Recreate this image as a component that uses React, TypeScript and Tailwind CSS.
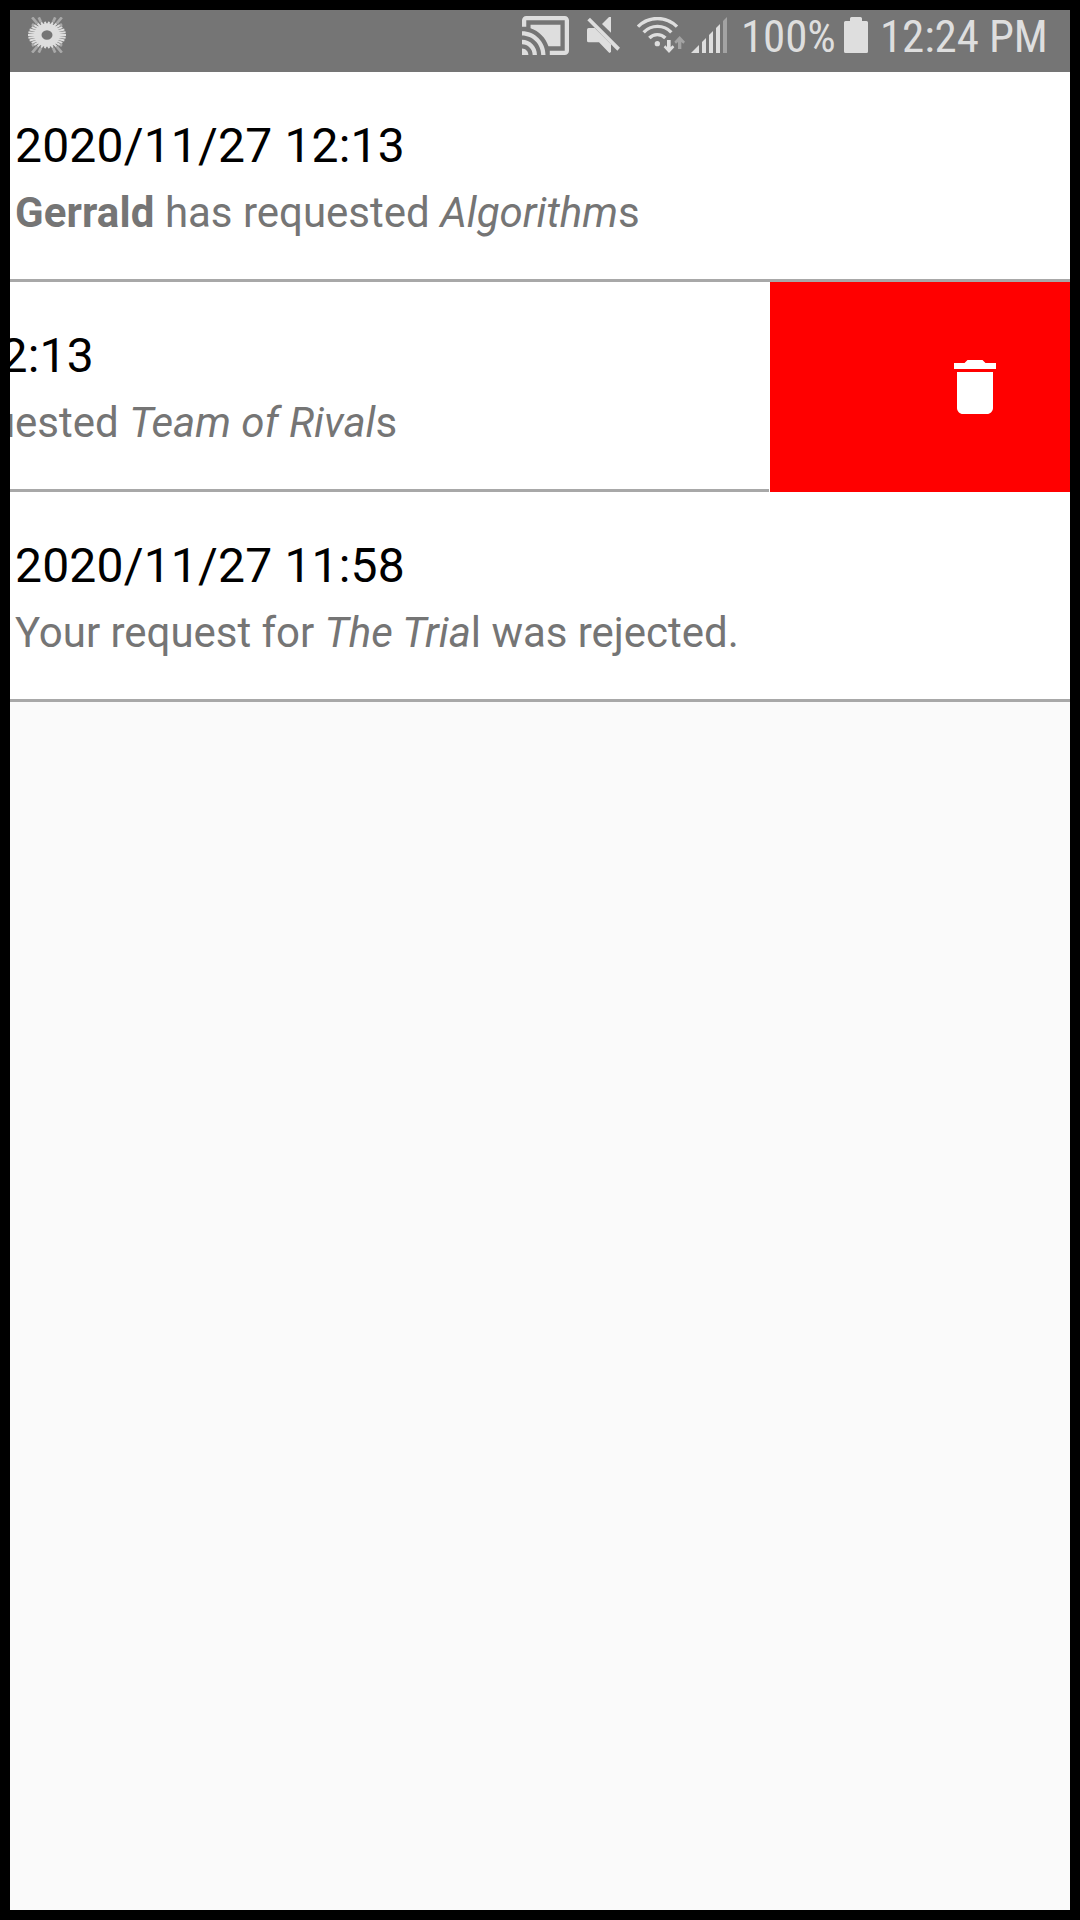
import type { ReactNode } from "react";

const rays = Array.from({ length: 30 }, (_, i) => (i * 2 * Math.PI) / 30);
const cornerRays = [36, 50, 65].flatMap((a) => [a, 180 - a, 180 + a, 360 - a]);

function FlowerIcon() {
  return (
    <svg className="ml-[18px] mt-[7px] h-9 w-[38px] shrink-0" viewBox="84 52 114 108">
      {cornerRays.map((deg) => {
        const a = (deg * Math.PI) / 180;
        const r = Math.min(53 / Math.abs(Math.sin(a)), 45 / Math.abs(Math.cos(a)));
        return (
          <line key={deg} x1={141 + 36 * Math.cos(a)} y1={106 + 36 * Math.sin(a)} x2={141 + r * Math.cos(a)} y2={106 + r * Math.sin(a)} stroke="#a9a9a9" strokeWidth="8" />
        );
      })}
      <ellipse cx="141" cy="106" rx="50" ry="42" fill="#757575" />
      {rays.map((a) => (
        <line key={a} x1={141 + 24 * Math.cos(a)} y1={106 + 22 * Math.sin(a)} x2={141 + 57 * Math.cos(a)} y2={106 + 40 * Math.sin(a)} stroke="#dedede" strokeWidth="6" />
      ))}
      <ellipse cx="141" cy="106" rx="27" ry="25" fill="none" stroke="#dedede" strokeWidth="21" />
    </svg>
  );
}

function CastIcon() {
  return (
    <svg className="mt-1.5 h-[39px] w-[47px] shrink-0" viewBox="1 3 22 18" preserveAspectRatio="none" fill="#dedede">
      <path d="M1 18v3h3c0-1.66-1.34-3-3-3zm0-4v2c2.76 0 5 2.24 5 5h2c0-3.87-3.13-7-7-7zm18-7H5v1.63c3.96 1.28 7.09 4.41 8.37 8.37H19V7zM1 10v2c4.97 0 9 4.03 9 9h2c0-6.08-4.93-11-11-11zm20-7H3c-1.1 0-2 .9-2 2v3h2V5h18v14h-7v2h7c1.1 0 2-.9 2-2V5c0-1.1-.9-2-2-2z" />
    </svg>
  );
}

function MuteIcon() {
  return (
    <svg className="ml-[18px] mt-[7px] h-9 w-[33px] shrink-0" viewBox="231 51 99 108" fill="#dedede">
      <path d="M236 84H254L303 133V156L298 159L267 127H236Q231 127 231 122V89Q231 84 236 84Z" />
      <path d="M276 72L297 51H303V98Z" />
      <path d="M232 61L240 53L330 143L322 152Z" />
    </svg>
  );
}

function WifiIcon() {
  return (
    <svg className="ml-[17px] mt-[7px] h-9 w-12 shrink-0" viewBox="51 51 144 108" fill="#dedede">
      <g fill="none" stroke="#dedede" strokeWidth="10">
        <path d="M54 80A82 82 0 0 1 171 80" />
        <path d="M71 97A57 57 0 0 1 154 97" />
        <path d="M88 114A33 33 0 0 1 136 114" />
      </g>
      <circle cx="112" cy="131" r="8" />
      <path d="M141 120H152V141L158 136L163 142L147 159L131 142L136 136L141 141Z" />
      <path d="M174 147H184V126L190 131L195 125L179 108L163 125L168 131L174 126Z" fill="#a3a3a3" />
    </svg>
  );
}

function SignalIcon() {
  return (
    <svg className="ml-1.5 mt-[7px] h-9 w-9 shrink-0" viewBox="213 51 108 108" fill="#dedede">
      <path d="M213 159L237 135V159ZM246 159V126L258 114V159ZM267 159V105L279 93V159ZM288 159V84L300 72V159Z" />
      <path d="M309 159V63L321 51V159Z" fill="#a3a3a3" />
    </svg>
  );
}

function BatteryIcon() {
  return (
    <svg className="mt-[7px] h-9 w-6 shrink-0" viewBox="0 0 24 36" fill="#dedede">
      <path d="M6 4V1.5Q6 0 7.500 0H16.500Q18 0 18 1.500V4H22.500Q24 4 24 5.500V34.500Q24 36 22.500 36H1.500Q0 36 0 34.500V5.500Q0 4 1.500 4Z" />
    </svg>
  );
}

function StatusBar() {
  return (
    <header className="flex h-[62px] items-start bg-[#757575] text-[45px] leading-[54px] tracking-[-0.12px] text-[#dedede] [font-stretch:75%]">
      <FlowerIcon />
      <div className="ml-[456px] flex items-start">
        <CastIcon />
        <MuteIcon />
        <WifiIcon />
        <SignalIcon />
        <span className="ml-3.5 w-[103px] whitespace-nowrap">100%</span>
        <BatteryIcon />
        <span className="ml-3 whitespace-nowrap">12:24 PM</span>
      </div>
    </header>
  );
}

function Notification({ date, children }: { date: string; children: ReactNode }) {
  return (
    <article className="h-[210px] w-full shrink-0 border-b-[3px] border-[#a8a8a8] bg-white pl-[5px] pt-[45px]">
      <h2 className="whitespace-nowrap text-[48px] leading-[57px] tracking-[0.19px] text-black">{date}</h2>
      <p className="mt-3.5 whitespace-nowrap text-[42px] leading-[49px] text-[#757575]">{children}</p>
    </article>
  );
}

export default function App() {
  return (
    <div className="flex h-[1920px] w-[1080px] flex-col overflow-hidden border-10 border-black bg-[#fafafa] font-['Roboto',sans-serif]">
      <StatusBar />
      <main>
        <Notification date="2020/11/27 12:13">
          <b className="tracking-[0.12px]">Gerrald</b> has requested <i>Algorithm</i>s
        </Notification>
        <div className="flex h-[210px] overflow-hidden bg-white">
          <div className="-ml-[311px] mr-px w-[1070px] shrink-0">
            <Notification date="2020/11/27 12:13">
              <b className="tracking-[0.12px]">Gerrald</b> has requested <i>Team of Rival</i>s
            </Notification>
          </div>
          <button aria-label="Delete" className="flex w-[300px] shrink-0 items-center justify-end bg-[#ff0000] pr-[59px]">
            <svg className="size-[72px]" viewBox="0 0 24 24" fill="white">
              <path d="M6 19c0 1.1.9 2 2 2h8c1.1 0 2-.9 2-2V7H6v12zM19 4h-3.5l-1-1h-5l-1 1H5v2h14V4z" />
            </svg>
          </button>
        </div>
        <Notification date="2020/11/27 11:58">
          <span className="tracking-[-0.03px]">
            Your request for <i>The Tria</i>l was rejected.
          </span>
        </Notification>
      </main>
    </div>
  );
}
